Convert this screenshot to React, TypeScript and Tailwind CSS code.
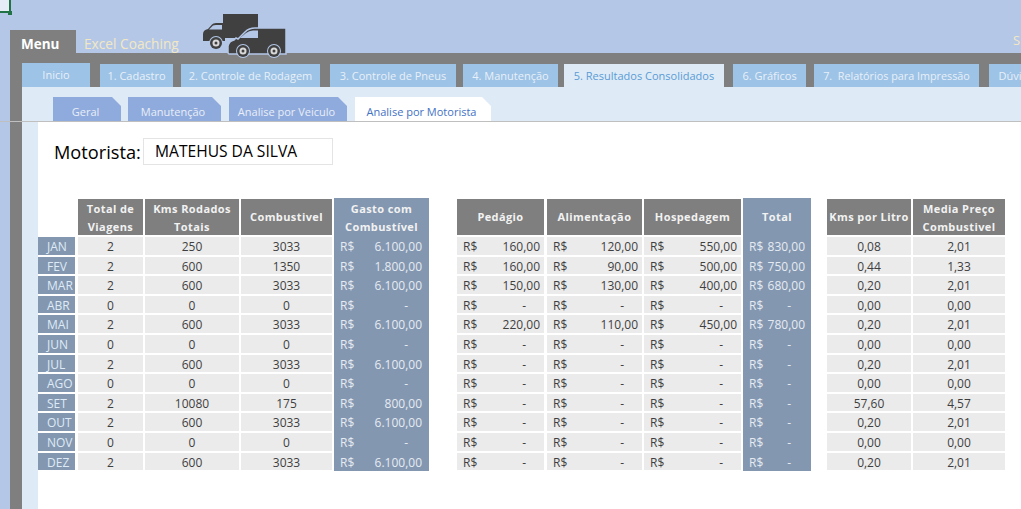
const font = { fontFamily: '"Open Sans", sans-serif' };

const tabs = [
  { label: "Inicio", left: 22, width: 68, top: 63 },
  { label: "1. Cadastro", left: 100, width: 73, top: 64 },
  { label: "2. Controle de Rodagem", left: 181, width: 139, top: 64 },
  { label: "3. Controle de Pneus", left: 330, width: 126, top: 64 },
  { label: "4. Manutenção", left: 463, width: 95, top: 64 },
  { label: "5. Resultados Consolidados", left: 564, width: 160, top: 64, active: true },
  { label: "6. Gráficos", left: 733, width: 73, top: 64 },
  { label: "7.  Relatórios para Impressão", left: 814, width: 165, top: 64, small: true },
  { label: "Dúvidas", left: 989, width: 60, top: 64 },
];

const subTabs = [
  { label: "Geral", left: 53, width: 68 },
  { label: "Manutenção", left: 128, width: 93 },
  { label: "Analise por Veiculo", left: 229, width: 118 },
  { label: "Analise por Motorista", left: 355, width: 136, active: true },
];

const rows = [
  ["JAN", "2", "250", "3033", "6.100,00", "160,00", "120,00", "550,00", "830,00", "0,08", "2,01"],
  ["FEV", "2", "600", "1350", "1.800,00", "160,00", "90,00", "500,00", "750,00", "0,44", "1,33"],
  ["MAR", "2", "600", "3033", "6.100,00", "150,00", "130,00", "400,00", "680,00", "0,20", "2,01"],
  ["ABR", "0", "0", "0", "-", "-", "-", "-", "-", "0,00", "0,00"],
  ["MAI", "2", "600", "3033", "6.100,00", "220,00", "110,00", "450,00", "780,00", "0,20", "2,01"],
  ["JUN", "0", "0", "0", "-", "-", "-", "-", "-", "0,00", "0,00"],
  ["JUL", "2", "600", "3033", "6.100,00", "-", "-", "-", "-", "0,20", "2,01"],
  ["AGO", "0", "0", "0", "-", "-", "-", "-", "-", "0,00", "0,00"],
  ["SET", "2", "10080", "175", "800,00", "-", "-", "-", "-", "57,60", "4,57"],
  ["OUT", "2", "600", "3033", "6.100,00", "-", "-", "-", "-", "0,20", "2,01"],
  ["NOV", "0", "0", "0", "-", "-", "-", "-", "-", "0,00", "0,00"],
  ["DEZ", "2", "600", "3033", "6.100,00", "-", "-", "-", "-", "0,20", "2,01"],
];

const ROW_TOP = 237;
const ROW_PITCH = 19.6;

function Header({ left, width, two, children }: { left: number; width: number; two?: boolean; children: React.ReactNode }) {
  return (
    <div
      className={`absolute top-[199px] h-[36px] bg-[#7f7f7f] text-[#f2f2f2] text-[11px] leading-[18px] font-bold tracking-[0.4px] flex items-center justify-center text-center ${two ? "pt-[2px]" : ""}`}
      style={{ left, width }}
    >
      <span>{children}</span>
    </div>
  );
}

function Center({ left, width, top, children }: { left: number; width: number; top: number; children: React.ReactNode }) {
  return (
    <div
      className="absolute h-[17.6px] bg-[#ebebeb] text-[#3f3f3f] text-[12px] leading-[20px] text-center"
      style={{ left, width, top }}
    >
      {children}
    </div>
  );
}

function Money({ left, width, top, value }: { left: number; width: number; top: number; value: string }) {
  return (
    <div
      className="absolute h-[17.6px] bg-[#ebebeb] text-[#3f3f3f] text-[12px] leading-[20px] flex justify-between pl-[6px] pr-[4px]"
      style={{ left, width, top }}
    >
      <span>R$</span>
      <span className={value === "-" ? "pr-[14px]" : ""}>{value}</span>
    </div>
  );
}

function Truck() {
  return (
    <svg className="absolute left-[195px] top-[8px]" width="100" height="52" viewBox="0 0 100 52">
      {/* back truck */}
      <g fill="#404040">
        <rect x="28" y="6" width="35" height="24" />
        <path d="M8 33 V26 Q8 22 13 21 L17 16.5 Q18 15 21 15 H30 V33 Z" />
      </g>
      <path d="M14 21.5 L18 17.5 Q19 17 21 17 H27 V21.5 Z" fill="#b4c7e7" />
      <circle cx="21" cy="35" r="7" fill="#b4c7e7" />
      <circle cx="21" cy="35" r="6" fill="#404040" />
      <circle cx="21" cy="35" r="3.5" fill="#d9d9d9" />
      <circle cx="21" cy="35" r="1.5" fill="#404040" />
      {/* van */}
      <path
        d="M34 46 Q33 46 33 44 V38 Q34 33 39 32 L41 30 L43 31 L50 24 Q54 20 60 20 H91 V46 Z"
        fill="#404040"
        stroke="#b4c7e7"
        strokeWidth="1.5"
      />
      <path d="M45 30 L51 25 Q54 22.5 58 22.5 H63 V30 Z" fill="#b4c7e7" />
      <circle cx="48" cy="43" r="7" fill="#b4c7e7" />
      <circle cx="48" cy="43" r="6" fill="#404040" />
      <circle cx="48" cy="43" r="3.5" fill="#d9d9d9" />
      <circle cx="48" cy="43" r="1.5" fill="#404040" />
      <circle cx="79" cy="43" r="7" fill="#b4c7e7" />
      <circle cx="79" cy="43" r="6" fill="#404040" />
      <circle cx="79" cy="43" r="3.5" fill="#d9d9d9" />
      <circle cx="79" cy="43" r="1.5" fill="#404040" />
    </svg>
  );
}

export default function App() {
  return (
    <div className="relative w-[1021px] h-[509px] overflow-hidden bg-[#b4c7e7]" style={font}>
      {/* selected cell marker */}
      <div className="absolute left-0 top-0 w-[11px] h-[13px] bg-[#e6edf7] border-r-2 border-b-2 border-[#217346]" />
      <div className="absolute left-[8px] top-[11px] w-[4px] h-[4px] bg-[#217346]" />

      {/* ribbon */}
      <div className="absolute left-[10px] top-[30px] w-[66px] h-[24px] bg-[#7f7f7f] text-white text-[13.5px] font-bold leading-[29px] pl-[11px]">
        Menu
      </div>
      <div className="absolute left-[84px] top-[35px] text-[#f3e7c3] text-[13.7px] leading-[18px]">Excel Coaching</div>
      <div className="absolute left-[1013px] top-[31px] text-[#f3e7c3] text-[13px] leading-[18px]">S</div>
      <div className="absolute left-[10px] right-0 top-[53px] h-[35px] bg-[#7f7f7f]" />
      <div className="absolute left-[10px] top-[53px] bottom-0 w-[12px] bg-[#7f7f7f]" />
      <Truck />

      {tabs.map((t) => (
        <div
          key={t.label}
          className={`absolute h-[24px] leading-[24px] text-center whitespace-pre ${t.small ? "text-[10.8px]" : "text-[11px]"} ${
            t.active ? "bg-[#deebf7] text-[#5b9bd5]" : "bg-[#9dc3e6] text-[#e8f0f8]"
          }`}
          style={{ left: t.left, width: t.width, top: t.top }}
        >
          {t.label}
        </div>
      ))}

      {/* sub tabs band */}
      <div className="absolute left-[22px] right-0 top-[87px] h-[34px] bg-[#deebf7]" />
      {subTabs.map((t) => (
        <div
          key={t.label}
          className={`absolute top-[97px] h-[24px] text-[11px] leading-[30px] text-center whitespace-nowrap pr-[3px] [clip-path:polygon(0_0,calc(100%-9px)_0,100%_9px,100%_100%,0_100%)] ${
            t.active ? "bg-white text-[#4472c4]" : "bg-[#8faadc] text-[#e8eef8]"
          }`}
          style={{ left: t.left, width: t.width }}
        >
          {t.label}
        </div>
      ))}
      <div className="absolute left-0 right-0 top-[121px] h-[1px] bg-[#bfbfbf]" />

      {/* sheet */}
      <div className="absolute left-[22px] top-[122px] bottom-0 w-[16px] bg-[#deebf7]" />
      <div className="absolute left-[38px] right-0 top-[122px] bottom-0 bg-white" />

      <div className="absolute left-[54px] top-[139px] text-[18.2px] leading-[26px] text-black">Motorista:</div>
      <div className="absolute left-[143px] top-[138px] w-[190px] h-[27px] border border-[#e4e4e4] bg-white pl-[11px] text-[15.6px] leading-[25px] text-black">
        MATEHUS DA SILVA
      </div>

      <Header left={78} width={65} two>Total de<br />Viagens</Header>
      <Header left={145} width={94} two>Kms Rodados<br />Totais</Header>
      <Header left={241} width={91}>Combustivel</Header>
      <Header left={457} width={87}>Pedágio</Header>
      <Header left={547} width={95}>Alimentação</Header>
      <Header left={644} width={97}>Hospedagem</Header>
      <Header left={827} width={84}>Kms por Litro</Header>
      <Header left={913} width={92} two>Media Preço<br />Combustivel</Header>

      {/* blue columns */}
      <div className="absolute left-[334px] top-[198px] w-[95px] h-[273px] bg-[#8497b0]" />
      <div className="absolute left-[743px] top-[198px] w-[68px] h-[273px] bg-[#8497b0]" />
      <div className="absolute left-[334px] top-[199px] w-[95px] h-[36px] flex items-center justify-center text-center text-[11px] leading-[18px] font-bold tracking-[0.4px] text-[#f2f2f2] pt-[2px]">
        <span>Gasto com<br />Combustível</span>
      </div>
      <div className="absolute left-[743px] top-[199px] w-[68px] h-[36px] flex items-center justify-center text-[11px] font-bold tracking-[0.4px] text-[#f2f2f2]">
        Total
      </div>

      {rows.map((r, i) => {
        const top = ROW_TOP + i * ROW_PITCH;
        return (
          <div key={r[0]}>
            <div
              className="absolute left-[38px] w-[37px] h-[17.6px] bg-[#8497b0] text-[#deebf7] text-[12px] leading-[20px] pl-[9px] whitespace-nowrap"
              style={{ top }}
            >
              {r[0]}
            </div>
            <Center left={78} width={65} top={top}>{r[1]}</Center>
            <Center left={145} width={94} top={top}>{r[2]}</Center>
            <Center left={241} width={91} top={top}>{r[3]}</Center>
            <div
              className="absolute left-[334px] w-[95px] h-[17.6px] text-[#e4ebf3] text-[12px] leading-[20px] flex justify-between pl-[6px] pr-[7px]"
              style={{ top }}
            >
              <span>R$</span>
              <span className={r[4] === "-" ? "pr-[14px]" : ""}>{r[4]}</span>
            </div>
            <Money left={457} width={87} top={top} value={r[5]} />
            <Money left={547} width={95} top={top} value={r[6]} />
            <Money left={644} width={97} top={top} value={r[7]} />
            <div
              className="absolute left-[743px] w-[68px] h-[17.6px] text-[#e4ebf3] text-[12px] leading-[20px] flex justify-between pl-[6px] pr-[6px]"
              style={{ top }}
            >
              <span>R$</span>
              <span className={r[8] === "-" ? "pr-[14px]" : ""}>{r[8]}</span>
            </div>
            <Center left={827} width={84} top={top}>{r[9]}</Center>
            <Center left={913} width={92} top={top}>{r[10]}</Center>
          </div>
        );
      })}
    </div>
  );
}
